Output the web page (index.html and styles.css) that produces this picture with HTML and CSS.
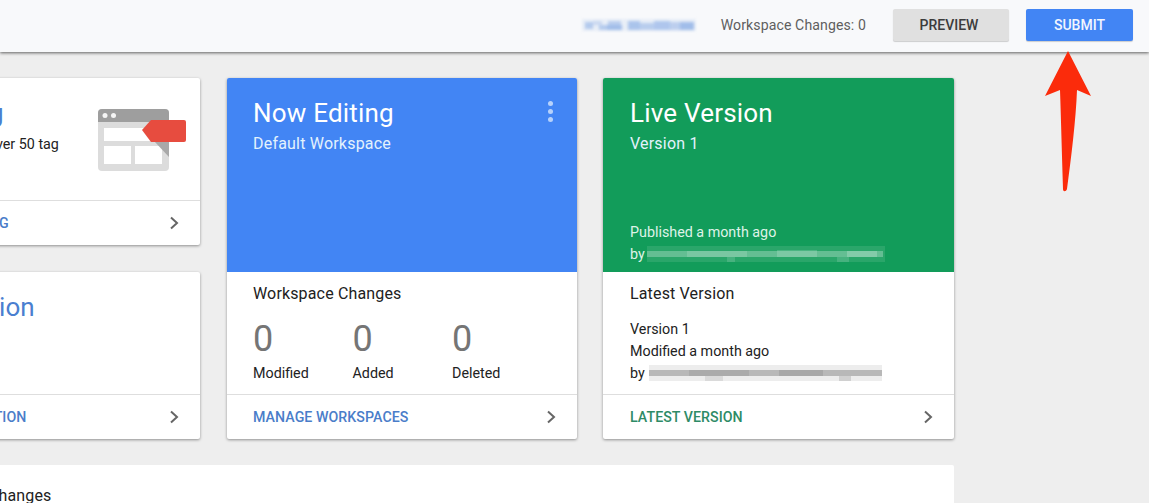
FILE: index.html
```html
<!DOCTYPE html>
<html lang="en">
<head>
<meta charset="utf-8">
<title>Workspace Overview</title>
<link rel="stylesheet" href="styles.css">
</head>
<body>
<header class="topbar">
  <svg class="name-blur" width="114" height="16" viewBox="0 0 114 16" aria-hidden="true">
    <g fill="#8fb0e6">
      <rect x="0" y="2" width="114" height="12" opacity=".14"/>
      <rect x="3" y="5" width="8" height="7" opacity=".6"/>
      <rect x="11" y="4" width="9" height="4" opacity=".35"/>
      <rect x="17" y="8" width="8" height="5" opacity=".6"/>
      <rect x="26" y="4" width="13" height="4" opacity=".55"/>
      <rect x="25" y="8" width="15" height="5" opacity=".8"/>
      <rect x="46" y="4" width="12" height="9" opacity=".7"/>
      <rect x="58" y="6" width="14" height="7" opacity=".55"/>
      <rect x="72" y="4" width="16" height="9" opacity=".65"/>
      <rect x="88" y="5" width="10" height="8" opacity=".5"/>
      <rect x="98" y="5" width="14" height="8" opacity=".8"/>
    </g>
  </svg>
  <span class="bar-count">Workspace Changes: 0</span>
  <button class="btn btn-preview">PREVIEW</button>
  <button class="btn btn-submit">SUBMIT</button>
</header>

<svg class="arrow" width="50" height="144" viewBox="0 0 50 144" aria-hidden="true">
  <path d="M24 2 L47 47 L33 41 C32 70 27 110 23 140 C22 143 19 143 19 140 C18 110 17 70 16 41 L1 47 Z" fill="#fb2b0b"/>
</svg>

<main class="board">
  <section class="card small-a">
    <div class="small-body">
      <div class="small-text">
        <h2 class="small-title">New Tag</h2>
        <p class="small-desc">Choose from over 50 tag</p>
      </div>
      <svg class="illustration" width="90" height="62" viewBox="0 0 90 62" aria-hidden="true">
        <rect x="0" y="0" width="71" height="62" rx="4" fill="#dcdcdc"/>
        <path d="M0 13 V4 a4 4 0 0 1 4-4 H67 a4 4 0 0 1 4 4 V13 Z" fill="#9e9e9e"/>
        <circle cx="7" cy="6.500" r="2.500" fill="#f5f5f5"/>
        <circle cx="15.500" cy="6.500" r="2.500" fill="#f5f5f5"/>
        <rect x="6" y="19" width="59" height="13" fill="#fff"/>
        <rect x="6" y="37" width="27" height="18" fill="#fff"/>
        <rect x="37" y="37" width="27" height="18" fill="#fff"/>
        <path d="M56 32 L71 48 V32 Z" fill="#a9a9a9"/>
        <path d="M44 21 L53 11 H86 a2 2 0 0 1 2 2 V31 a2 2 0 0 1-2 2 H53 Z" fill="#e74c3f"/>
      </svg>
    </div>
    <a class="card-link link-blue small-link">ADD A NEW TAG<svg class="chev" width="10" height="14" viewBox="0 0 10 14" aria-hidden="true"><path d="M2 1.500 L8 7 L2 12.500" fill="none" stroke="#666" stroke-width="2"/></svg></a>
  </section>

  <section class="card tall now">
    <div class="hero hero-blue">
      <h2 class="hero-title">Now Editing</h2>
      <p class="hero-sub">Default Workspace</p>
      <span class="dots" aria-hidden="true"><i></i><i></i><i></i></span>
    </div>
    <div class="tall-body">
      <h3 class="tall-heading">Workspace Changes</h3>
      <div class="stats">
        <div class="stat"><span class="stat-num">0</span><span class="stat-label">Modified</span></div>
        <div class="stat"><span class="stat-num">0</span><span class="stat-label">Added</span></div>
        <div class="stat"><span class="stat-num">0</span><span class="stat-label">Deleted</span></div>
      </div>
    </div>
    <a class="card-link link-blue">MANAGE WORKSPACES<svg class="chev" width="10" height="14" viewBox="0 0 10 14" aria-hidden="true"><path d="M2 1.500 L8 7 L2 12.500" fill="none" stroke="#666" stroke-width="2"/></svg></a>
  </section>

  <section class="card tall live">
    <div class="hero hero-green">
      <h2 class="hero-title">Live Version</h2>
      <p class="hero-sub">Version 1</p>
      <p class="hero-meta">Published a month ago</p>
      <p class="hero-by">by
        <svg class="by-blur" width="238" height="18" viewBox="0 0 238 18" aria-hidden="true">
          <g fill="#fff">
            <rect x="0" y="1" width="238" height="16" opacity=".1"/>
            <rect x="0" y="6" width="236" height="6" opacity=".28"/>
            <rect x="40" y="6" width="60" height="6" opacity=".14"/>
            <rect x="130" y="5" width="40" height="7" opacity=".16"/>
            <rect x="200" y="6" width="30" height="6" opacity=".2"/>
            <rect x="80" y="12" width="8" height="5" opacity=".14"/>
            <rect x="190" y="12" width="12" height="5" opacity=".14"/>
          </g>
        </svg>
      </p>
    </div>
    <div class="tall-body">
      <h3 class="tall-heading">Latest Version</h3>
      <p class="version-line first">Version 1</p>
      <p class="version-line">Modified a month ago</p>
      <p class="version-line by-line">by
        <svg class="by-blur" width="233" height="18" viewBox="0 0 233 18" aria-hidden="true">
          <g fill="#777">
            <rect x="0" y="1" width="233" height="16" opacity=".13"/>
            <rect x="0" y="6" width="233" height="6" opacity=".45"/>
            <rect x="40" y="6" width="60" height="6" opacity=".2"/>
            <rect x="130" y="6" width="44" height="6" opacity=".25"/>
            <rect x="56" y="12" width="18" height="5" opacity=".16"/>
            <rect x="190" y="12" width="12" height="5" opacity=".25"/>
          </g>
        </svg>
      </p>
    </div>
    <a class="card-link link-green">LATEST VERSION<svg class="chev" width="10" height="14" viewBox="0 0 10 14" aria-hidden="true"><path d="M2 1.500 L8 7 L2 12.500" fill="none" stroke="#666" stroke-width="2"/></svg></a>
  </section>

  <section class="card small-b">
    <div class="small-body">
      <div class="small-text">
        <h2 class="small-title">Description</h2>
      </div>
    </div>
    <a class="card-link link-blue small-link">EDIT DESCRIPTION<svg class="chev" width="10" height="14" viewBox="0 0 10 14" aria-hidden="true"><path d="M2 1.500 L8 7 L2 12.500" fill="none" stroke="#666" stroke-width="2"/></svg></a>
  </section>

  <section class="card wide">
    <h3 class="tall-heading">Workspace Changes</h3>
  </section>
</main>
</body>
</html>
```
FILE: styles.css
```css
* { box-sizing: border-box; }
html, body { height: 100%; }
body {
  margin: 0;
  background: #eeeeee;
  font-family: Roboto, "Liberation Sans", sans-serif;
  color: #212121;
  overflow: hidden;
  position: relative;
}
h2, h3, p { margin: 0; font-weight: 400; }

.topbar {
  height: 52px;
  background: #f8f9fb;
  box-shadow: 0 1px 3px rgba(0,0,0,.6);
  display: flex;
  align-items: center;
  justify-content: flex-end;
  padding: 0 16px 2px 0;
  position: relative;
  z-index: 2;
}
.name-blur { margin-right: 25px; filter: blur(1.5px); }
.bar-count { font-size: 14.1px; color: #5f5f5f; margin-right: 27px; letter-spacing: .1px; }
.btn {
  border: 0;
  border-radius: 2px;
  height: 32px;
  font: 500 14px Roboto, sans-serif;
  box-shadow: 0 1px 1px rgba(0,0,0,.18);
}
.btn-preview { width: 116px; padding: 0 4px 0 0; background: #e0e0e0; color: #3c3c3c; margin-right: 17px; }
.btn-submit { width: 107px; background: #4285f4; color: #f2f6ff; }

.arrow { position: absolute; left: 1044px; top: 49px; z-index: 3; }

.board {
  margin-left: -127px;
  padding-top: 26px;
  display: grid;
  grid-template-columns: 328px 350px 351px;
  grid-template-rows: 167px 167px auto;
  column-gap: 26px;
  row-gap: 27px;
  width: 1081px;
}
.card {
  background: #fff;
  border-radius: 2px;
  box-shadow: 0 1px 3px rgba(0,0,0,.4);
  display: flex;
  flex-direction: column;
  overflow: hidden;
}
.small-a { grid-column: 1; grid-row: 1; margin-right: 1px; }
.small-b { grid-column: 1; grid-row: 2; margin-right: 1px; }
.tall { grid-row: 1 / span 2; }
.now { grid-column: 2; }
.live { grid-column: 3; }
.wide { grid-column: 1 / span 3; height: 60px; padding: 21px 26px 0 30px; margin-top: -1px; box-shadow: none; }

.small-body { flex: 1; display: flex; justify-content: space-between; padding: 0 12px 0 30px; }
.small-text { padding-top: 19px; }
.small-title { font-size: 26px; line-height: 32px; color: #4a7fd0; white-space: nowrap; }
.small-desc { font-size: 14.3px; line-height: 20px; margin: 5px 0 0 -1px; color: #222; white-space: nowrap; }
.illustration { margin-top: 31px; }

.card-link {
  height: 45px;
  flex: none;
  border-top: 1px solid #dedede;
  display: flex;
  align-items: center;
  justify-content: space-between;
  padding: 0 21px 0 26px;
  font-size: 14.2px;
  letter-spacing: .05px;
  font-weight: 500;
}
.small-link { padding-left: 30px; }
.live .card-link { padding-left: 27px; }
.link-blue { color: #4a7dc9; }
.link-green { color: #2e8b66; }
.chev { display: block; }

.hero {
  height: 194px;
  flex: none;
  position: relative;
  padding: 19px 26px 0;
  color: #fff;
  display: flex;
  flex-direction: column;
}
.live .hero { padding-left: 27px; }
.hero-blue { background: #4285f4; }
.hero-green { background: #129c5a; }
.hero-title { font-size: 26px; line-height: 32px; letter-spacing: .2px; }
.hero-sub { font-size: 16px; line-height: 20px; margin-top: 5px; color: #e3f2fd; letter-spacing: .2px; }
.hero-meta { margin-top: auto; font-size: 14.3px; line-height: 22px; color: #dff3e8; }
.hero-by { font-size: 14.3px; line-height: 22px; margin-bottom: 7px; color: #dff3e8; display: flex; align-items: center; gap: 2px; }
.dots { position: absolute; top: 23px; right: 24px; display: flex; flex-direction: column; gap: 3px; }
.dots i { width: 5px; height: 5px; border-radius: 50%; background: #b7d2fb; display: block; }

.tall-body { flex: 1; padding: 12px 26px 0; }
.live .tall-body { padding-left: 27px; }
.tall-heading { font-size: 16px; line-height: 20px; color: #212121; letter-spacing: .15px; }
.stats { display: grid; grid-template-columns: 99.500px 99.500px 1fr; margin-top: 14px; }
.stat { display: flex; flex-direction: column; }
.stat-num { font-size: 36px; line-height: 42px; color: #757575; }
.stat-label { font-size: 14.300px; line-height: 20px; margin-top: 3px; color: #222; }
.version-line { font-size: 14.300px; line-height: 22px; color: #222; }
.version-line.first { margin-top: 14px; }
.by-line { display: flex; align-items: center; gap: 4px; }
.by-blur { display: block; filter: blur(.6px); }
```
